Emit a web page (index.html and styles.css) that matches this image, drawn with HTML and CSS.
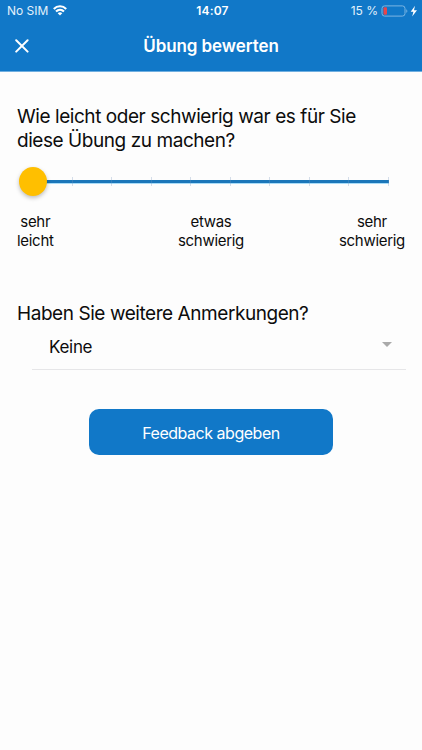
FILE: index.html
```html
<!DOCTYPE html>
<html lang="de">
<head>
    <meta charset="UTF-8">
    <meta name="viewport" content="width=device-width, initial-scale=1.0">
    <title>Übung bewerten</title>
    <link rel="stylesheet" href="styles.css">
</head>
<body>
    <header class="header">
        <div class="statusbar">
            <div class="carrier">
                <span class="sim">No SIM</span>
                <svg class="wifi" width="14" height="11" viewBox="0 0 14 11" fill="none" stroke="#fff" stroke-width="2.1">
                    <path d="M0.8 4C4.3 0.4 9.7 0.4 13.2 4"/>
                    <path d="M3 6.5C5.3 4.3 8.7 4.3 11 6.5"/>
                    <path d="M7 10.6L4.7 8.2C6 6.9 8 6.9 9.3 8.2Z" fill="#fff" stroke="none"/>
                </svg>
            </div>
            <span class="time">14:07</span>
            <div class="power">
                <span class="percent">15 %</span>
                <svg width="37" height="12" viewBox="0 0 37 12">
                    <rect x="1" y="0.9" width="23" height="10.2" rx="2.6" fill="none" stroke="#7cb6e3"/>
                    <rect x="2.5" y="2.3" width="3.5" height="7.4" rx="1" fill="#e8454b"/>
                    <path d="M25.3 4.2C26.7 4.6 26.7 7.4 25.3 7.8Z" fill="#7cb6e3"/>
                    <path d="M34 0.8L29.7 6.8H32.4L31.2 11.4L36 5.2H33Z" fill="#fff"/>
                </svg>
            </div>
        </div>
        <div class="titlebar">
            <button class="close" aria-label="Schließen">
                <svg width="14" height="14" viewBox="0 0 14 14" fill="none" stroke="#fff" stroke-width="2" stroke-linecap="round">
                    <path d="M1.2 1.2L12.6 12.6M12.6 1.2L1.2 12.6"/>
                </svg>
            </button>
            <h1>Übung bewerten</h1>
        </div>
    </header>

    <main class="content">
        <h2>Wie leicht oder schwierig war es für Sie<br>diese Übung zu machen?</h2>

        <div class="slider">
            <div class="track"></div>
            <div class="ticks">
                <i></i><i></i><i></i><i></i><i></i><i></i><i></i><i></i><i></i><i></i>
            </div>
            <div class="knob"></div>
        </div>
        <div class="labels">
            <span>sehr<br>leicht</span>
            <span>etwas<br>schwierig</span>
            <span>sehr<br>schwierig</span>
        </div>

        <h2 class="remarks">Haben Sie weitere Anmerkungen?</h2>
        <div class="select">
            <span>Keine</span>
            <span class="arrow"></span>
        </div>

        <button class="submit">Feedback abgeben</button>
    </main>
</body>
</html>
```
FILE: styles.css
```css
* {
    box-sizing: border-box;
}
body {
    margin: 0;
    min-height: 100vh;
    background-color: #fdfdfd;
    color: #0c0c0c;
    font-family: Inter, "Liberation Sans", sans-serif;
}
button {
    border: none;
    padding: 0;
    font-family: inherit;
    color: white;
}
h1, h2 {
    margin: 0;
}
.header {
    height: 72px;
    background-color: #1178c8;
    border-bottom: 1px solid #70afe0;
    color: white;
}
.statusbar {
    display: grid;
    grid-template-columns: 1fr auto 1fr;
    align-items: center;
    height: 21px;
    padding: 0 4px 0 7px;
    font-size: 12px;
}
.carrier, .power {
    display: flex;
    align-items: center;
}
.carrier {
    gap: 5px;
    color: #e3f1fb;
}
.power {
    justify-content: flex-end;
    gap: 3px;
    color: #e3f1fb;
}
.time {
    font-weight: 600;
    letter-spacing: 0.2px;
}
.titlebar {
    display: grid;
    grid-template-columns: 44px 1fr 44px;
    align-items: center;
    height: 49px;
}
.close {
    display: flex;
    justify-content: center;
    background: none;
}
h1 {
    font-size: 17px;
    font-weight: 600;
    letter-spacing: -0.08px;
    text-align: center;
}
.content {
    display: flex;
    flex-direction: column;
    padding: 33px 16px 0 17px;
}
h2 {
    font-size: 19px;
    font-weight: 400;
    line-height: 24px;
    letter-spacing: -0.44px;
}
.slider {
    position: relative;
    height: 28px;
    margin: 14px 17px 0 15px;
}
.track {
    position: absolute;
    top: 13px;
    left: 0;
    right: 0;
    height: 3px;
    background-color: #1b76b9;
    box-shadow: 0 1px 0 #a9dcf8;
}
.ticks {
    position: absolute;
    top: 10px;
    left: 0;
    right: 0;
    display: flex;
    justify-content: space-between;
}
.ticks i {
    width: 1px;
    height: 9px;
    background-color: rgba(120, 150, 190, 0.3);
}
/* Knob is centred on the first tick */
.knob {
    position: absolute;
    top: 0;
    left: -13px;
    width: 28px;
    height: 29px;
    border-radius: 50%;
    background-color: #ffbf00;
    box-shadow: 0 2px 4px rgba(0, 0, 0, 0.25);
}
.labels {
    display: grid;
    grid-template-columns: 1fr auto 1fr;
    margin: 17px 1px 0 0;
    font-size: 15px;
    line-height: 19px;
    letter-spacing: -0.3px;
    text-align: center;
}
.labels span:first-child {
    justify-self: start;
}
.labels span:last-child {
    justify-self: end;
}
.remarks {
    margin-top: 52px;
}
.select {
    display: flex;
    justify-content: space-between;
    height: 44px;
    margin-left: 15px;
    padding: 10px 14px 0 17px;
    border-bottom: 1px solid #e6e6e8;
    font-size: 17px;
    line-height: 23px;
    letter-spacing: -0.3px;
}
.arrow {
    width: 0;
    height: 0;
    margin-top: 6px;
    border: 5px solid transparent;
    border-top-color: #aaa;
    border-bottom: none;
}
.submit {
    width: 244px;
    height: 46px;
    margin: 39px 0 0 72px;
    padding-top: 2px;
    border-radius: 10px;
    background-color: #1178c8;
    font-size: 16px;
    letter-spacing: -0.48px;
}
```
